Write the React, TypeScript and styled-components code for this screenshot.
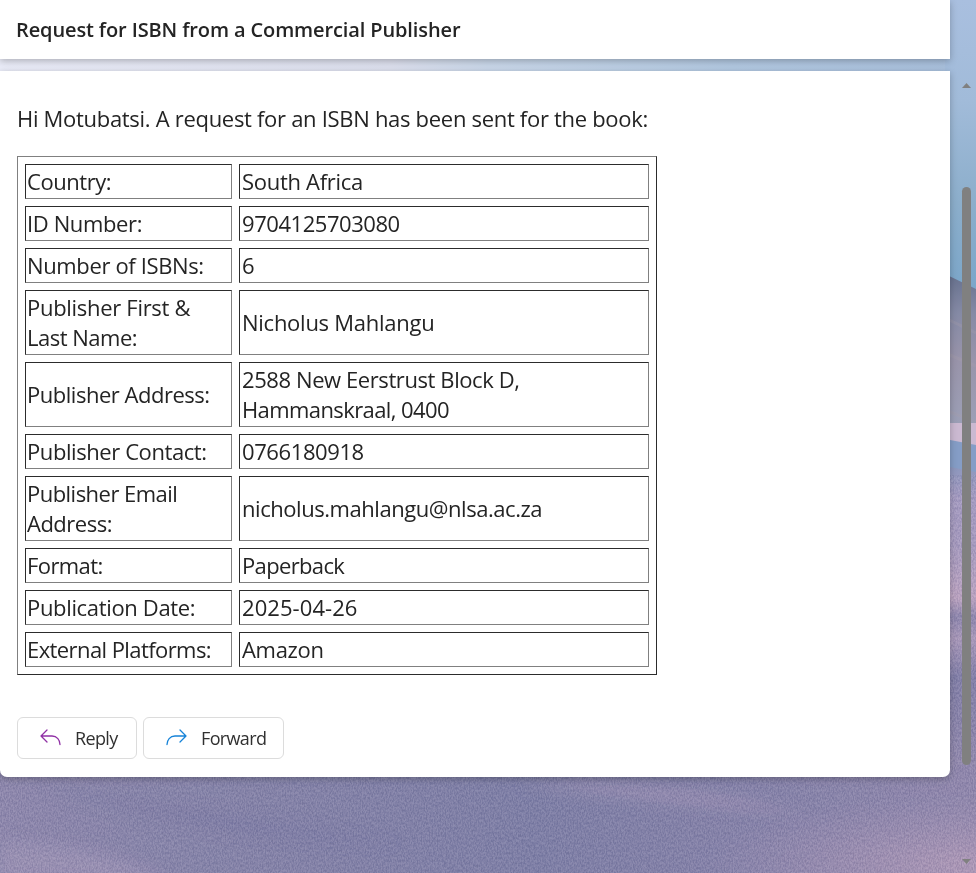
import React from "react";
import styled, { createGlobalStyle } from "styled-components";

const GlobalStyle = createGlobalStyle`
  * { box-sizing: border-box; }
  html, body { margin: 0; height: 100%; overflow: hidden; }
  body {
    font-family: "Open Sans", "Noto Sans", sans-serif;
    color: #242424;
    background: #8584a8;
  }
`;

const Screen = styled.div`
  position: relative;
  display: flex;
  width: 976px;
  height: 873px;
  overflow: hidden;
`;

const Wallpaper = styled.svg`
  position: absolute;
  inset: 0;
  width: 976px;
  height: 873px;
`;

const Pane = styled.main`
  position: relative;
  width: 950px;
  display: flex;
  flex-direction: column;
  gap: 12px;
`;

const SubjectBar = styled.header`
  height: 59px;
  padding: 0 16px;
  background: #fff;
  box-shadow: 0 2px 7px rgba(0, 0, 0, 0.26);
`;

const Subject = styled.h1`
  margin: 0;
  font-size: 20px;
  font-weight: 600;
  line-height: 59px;
  letter-spacing: -0.12px;
  white-space: nowrap;
`;

const Message = styled.article`
  height: 706px;
  padding: 32px 17px 0;
  background: #fff;
  border-radius: 0 0 7px 7px;
  box-shadow: 0 2px 7px rgba(0, 0, 0, 0.26);
`;

const Intro = styled.p`
  margin: 0 0 23px;
  font-size: 22px;
  line-height: 30px;
  letter-spacing: -0.3px;
  white-space: nowrap;
`;

const Details = styled.table`
  width: 640px;
  table-layout: fixed;
  border: 1px solid;
  border-color: #808080 #2c2c2c #2c2c2c #808080;
  border-spacing: 7px;
  border-collapse: separate;
`;

const Cell = styled.td<{ $width: number; $lines: number }>`
  width: ${(p) => p.$width}px;
  height: ${(p) => p.$lines * 30 + 5}px;
  padding: 1px 0 2px 1px;
  border: 1px solid;
  border-color: #2c2c2c #808080 #808080 #2c2c2c;
  vertical-align: middle;
`;

const ValueCell = styled(Cell)`
  padding-left: 2px;
`;

const Line = styled.div<{ $tracking: number }>`
  font-size: 22px;
  line-height: 30px;
  letter-spacing: ${(p) => p.$tracking}px;
  white-space: nowrap;
`;

const Actions = styled.div`
  display: flex;
  gap: 6px;
  margin-top: 42px;
`;

const ActionButton = styled.button<{ $width: number }>`
  display: flex;
  align-items: center;
  gap: 14px;
  width: ${(p) => p.$width}px;
  height: 42px;
  padding: 0 0 0 22px;
  border: 1px solid #dcdcdc;
  border-radius: 6px;
  background: #fff;
  color: #303030;
  font: 400 18px "Open Sans", sans-serif;
  letter-spacing: -0.65px;
`;

const ArrowIcon = styled.svg<{ $color: string }>`
  width: 21px;
  height: 18px;
  flex: none;
  margin-top: -2px;
  fill: none;
  stroke: ${(p) => p.$color};
  stroke-width: 1.3;
  stroke-linecap: round;
  stroke-linejoin: round;
`;

const ScrollBar = styled.div`
  position: relative;
  width: 26px;
  padding: 83px 0 0 12px;
`;

const ScrollArrow = styled.svg`
  display: block;
  width: 9px;
  height: 5px;
  fill: #808080;
`;

const ScrollThumb = styled.div`
  width: 9px;
  height: 578px;
  margin: 99px 0 94px;
  border-radius: 5px;
  background: #808080;
`;

type TextLine = { text: string; tracking: number };

const line = (text: string, tracking = -0.3): TextLine => ({ text, tracking });

const rows: { label: TextLine[]; value: TextLine[] }[] = [
  { label: [line("Country:", -0.45)], value: [line("South Africa")] },
  { label: [line("ID Number:", -0.38)], value: [line("9704125703080", -0.45)] },
  { label: [line("Number of ISBNs:", -0.36)], value: [line("6")] },
  {
    label: [line("Publisher First &"), line("Last Name:", -0.5)],
    value: [line("Nicholus Mahlangu", -0.26)],
  },
  {
    label: [line("Publisher Address:", -0.48)],
    value: [line("2588 New Eerstrust Block D,", -0.41), line("Hammanskraal, 0400", -0.6)],
  },
  { label: [line("Publisher Contact:", -0.42)], value: [line("0766180918", -0.4)] },
  {
    label: [line("Publisher Email", -0.53), line("Address:", -0.5)],
    value: [line("nicholus.mahlangu@nlsa.ac.za", -0.45)],
  },
  { label: [line("Format:", -0.6)], value: [line("Paperback", -0.65)] },
  { label: [line("Publication Date:", -0.34)], value: [line("2025-04-26", 0.07)] },
  { label: [line("External Platforms:", -0.58)], value: [line("Amazon")] },
];

const renderLines = (lines: TextLine[]) =>
  lines.map(({ text, tracking }) => (
    <Line key={text} $tracking={tracking}>{text}</Line>
  ));

function DuneWallpaper() {
  return (
    <Wallpaper viewBox="0 0 976 873" aria-hidden="true">
      <defs>
        <linearGradient id="haze" x1="0" x2="1" y1="0" y2="0">
          <stop offset="0" stopColor="#e9ebf7" />
          <stop offset="0.4" stopColor="#dcdfed" />
          <stop offset="0.5" stopColor="#c8d6e8" />
          <stop offset="0.75" stopColor="#b1c7e0" />
          <stop offset="1" stopColor="#a7bedb" />
        </linearGradient>
        <linearGradient id="sky" x1="0" x2="0" y1="0" y2="1">
          <stop offset="0" stopColor="#a9bfdf" />
          <stop offset="0.35" stopColor="#a1bbd9" />
          <stop offset="0.7" stopColor="#8caecb" />
          <stop offset="1" stopColor="#7ba6c9" />
        </linearGradient>
        <linearGradient id="ridge" x1="0" x2="0" y1="0" y2="1">
          <stop offset="0" stopColor="#67718e" />
          <stop offset="0.25" stopColor="#858aa5" />
          <stop offset="0.55" stopColor="#9994aa" />
          <stop offset="1" stopColor="#9ca0b7" />
        </linearGradient>
        <linearGradient id="slope" x1="0" x2="0" y1="0" y2="1">
          <stop offset="0" stopColor="#8c97bd" />
          <stop offset="0.1" stopColor="#a69cc2" />
          <stop offset="0.25" stopColor="#a89cc0" />
          <stop offset="0.42" stopColor="#bea5c2" />
          <stop offset="0.48" stopColor="#8f87ae" />
          <stop offset="0.55" stopColor="#aa99ba" />
          <stop offset="0.67" stopColor="#827fa8" />
          <stop offset="1" stopColor="#958bae" />
        </linearGradient>
        <linearGradient id="floor" x1="0" x2="1" y1="0" y2="0">
          <stop offset="0" stopColor="#8e88ad" />
          <stop offset="0.25" stopColor="#8583a9" />
          <stop offset="0.55" stopColor="#7e7fa7" />
          <stop offset="0.8" stopColor="#8783aa" />
          <stop offset="1" stopColor="#9188ad" />
        </linearGradient>
        <radialGradient id="glow">
          <stop offset="0" stopColor="#b49cb9" stopOpacity="0.95" />
          <stop offset="1" stopColor="#a291b3" stopOpacity="0" />
        </radialGradient>
        <filter id="soften" x="-10%" y="-40%" width="120%" height="180%">
          <feGaussianBlur stdDeviation="7" />
        </filter>
        <filter id="grain" x="0" y="0" width="100%" height="100%" colorInterpolationFilters="sRGB">
          <feTurbulence type="fractalNoise" baseFrequency="0.75 0.4" numOctaves="2" seed="8" />
          <feColorMatrix values="2.6 0 0 0 -0.75  2.3 0 0 0 -0.62  1.8 0 0 0 -0.25  0 0 0 0 0.09" />
        </filter>
      </defs>
      <rect width="976" height="110" fill="url(#haze)" />
      <rect x="945" width="31" height="290" fill="url(#sky)" />
      <path d="M945 274L976 289V430H945Z" fill="url(#ridge)" />
      <path d="M945 318L976 333M945 353L976 366M945 410L976 422" stroke="#aaa0ac" strokeWidth="3" opacity="0.25" />
      <path d="M945 423H976V450H945Z" fill="#cbb9d1" />
      <path d="M945 439L976 445V480H945Z" fill="#859dc6" />
      <path d="M945 466L976 472V780H945Z" fill="url(#slope)" />
      <rect y="765" width="976" height="108" fill="url(#floor)" />
      <g filter="url(#soften)">
        <path d="M0 842Q90 840 170 880H0Z" fill="#9990b2" />
        <path d="M520 783Q670 778 810 815Q650 804 520 783" fill="#a194b5" opacity="0.65" />
        <path d="M40 785Q190 840 400 845Q210 810 40 785" fill="#706f9f" opacity="0.3" />
      </g>
      <ellipse cx="995" cy="865" rx="300" ry="70" fill="url(#glow)" />
      <rect x="945" y="475" width="31" height="290" filter="url(#grain)" />
      <rect y="765" width="976" height="108" filter="url(#grain)" />
    </Wallpaper>
  );
}

export default function App() {
  return (
    <>
      <GlobalStyle />
      <Screen>
        <DuneWallpaper />
        <Pane>
          <SubjectBar>
            <Subject>Request for ISBN from a Commercial Publisher</Subject>
          </SubjectBar>
          <Message>
            <Intro>Hi Motubatsi. A request for an ISBN has been sent for the book:</Intro>
            <Details>
              <tbody>
                {rows.map(({ label, value }) => {
                  const lines = Math.max(label.length, value.length);
                  return (
                    <tr key={label[0].text}>
                      <Cell $width={207} $lines={lines}>{renderLines(label)}</Cell>
                      <ValueCell $width={410} $lines={lines}>{renderLines(value)}</ValueCell>
                    </tr>
                  );
                })}
              </tbody>
            </Details>
            <Actions>
              <ActionButton $width={120}>
                <ArrowIcon $color="#9031a5" viewBox="0 0 21 18">
                  <path d="M7 2L1 8L7 14M1.5 8H12C17 8 20 12 20 16.5" />
                </ArrowIcon>
                Reply
              </ActionButton>
              <ActionButton $width={141}>
                <ArrowIcon $color="#1683d8" viewBox="0 0 21 18">
                  <path d="M14 2L20 8L14 14M19.5 8H9C4 8 1 12 1 16.5" />
                </ArrowIcon>
                Forward
              </ActionButton>
            </Actions>
          </Message>
        </Pane>
        <ScrollBar>
          <ScrollArrow viewBox="0 0 9 5"><path d="M0 5L4.5 0L9 5Z" /></ScrollArrow>
          <ScrollThumb />
          <ScrollArrow viewBox="0 0 9 5"><path d="M0 0H9L4.5 5Z" /></ScrollArrow>
        </ScrollBar>
      </Screen>
    </>
  );
}
